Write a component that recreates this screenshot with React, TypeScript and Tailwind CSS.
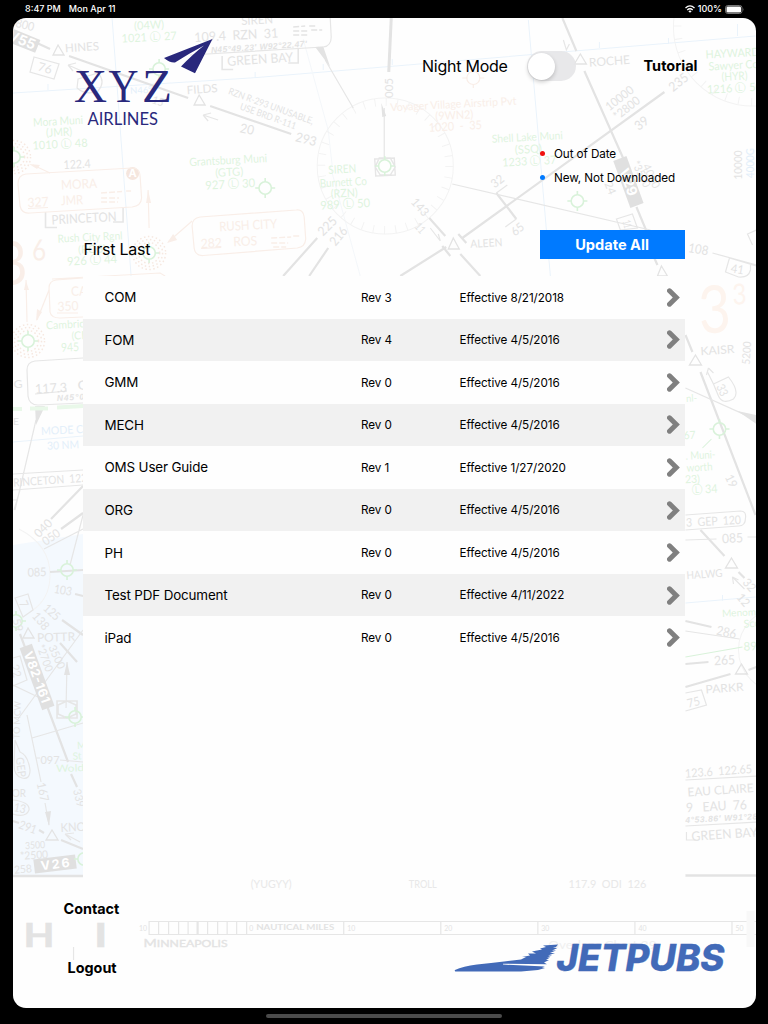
import React, { useState } from 'react';

const GRAY = '#e3e3e3';
const GREEN = '#def4de';
const PEACH = '#f9eee8';
const BLUE = '#e3effa';

const documents = [
  { name: 'COM', rev: 'Rev 3', effective: 'Effective 8/21/2018' },
  { name: 'FOM', rev: 'Rev 4', effective: 'Effective 4/5/2016' },
  { name: 'GMM', rev: 'Rev 0', effective: 'Effective 4/5/2016' },
  { name: 'MECH', rev: 'Rev 0', effective: 'Effective 4/5/2016' },
  { name: 'OMS User Guide', rev: 'Rev 1', effective: 'Effective 1/27/2020' },
  { name: 'ORG', rev: 'Rev 0', effective: 'Effective 4/5/2016' },
  { name: 'PH', rev: 'Rev 0', effective: 'Effective 4/5/2016' },
  { name: 'Test PDF Document', rev: 'Rev 0', effective: 'Effective 4/11/2022' },
  { name: 'iPad', rev: 'Rev 0', effective: 'Effective 4/5/2016' },
];

// [text, center x, center y, width, font size, rotation, color]
type Label = [string, number, number, number, number, number, string];

const labels: Label[] = [
  ['5800', 22, 24, 25, 12, 14, GRAY],
  ['HINES', 82, 47, 34, 11.5, -4, GRAY],
  ['76', 45, 68, 14, 12, 15, GRAY],
  ['(04W)', 149, 25, 30, 11.5, -3, GREEN],
  ['1021 Ⓛ 27', 149, 37, 55, 11.5, -3, GREEN],
  ['N46°', 141, 90, 22, 9, -3, BLUE],
  ['15', 158, 101, 12, 11, 18, GRAY],
  ['Mora Muni', 58, 121, 50, 11.5, -3, GREEN],
  ['(JMR)', 59, 132, 26, 11.5, -3, GREEN],
  ['1010 Ⓛ 48', 60, 144, 55, 11.5, -3, GREEN],
  ['FILDS', 202, 89, 31, 11.5, -4, GRAY],
  ['RZN R-293 UNUSABLE,', 271, 106, 90, 9.5, 20, GRAY],
  ['USE BRD R-111', 268, 116, 59, 9.5, 20, GRAY],
  ['20', 247, 129, 14, 13, 12, GRAY],
  ['293', 306, 139, 21, 13, 14, GRAY],
  ['SIREN', 257, 20, 32, 11.5, -3, GRAY],
  ['109.4  RZN  31', 236, 35, 84, 13, -3, GRAY],
  ['GREEN BAY', 260, 59, 66, 13, -4, GRAY],
  ['005', 388, 88, 20, 12, -90, GRAY],
  ['Voyager Village Airstrip Pvt', 453, 104, 126, 11, -3, PEACH],
  ['(9WN2)', 454, 115, 38, 11.5, -3, PEACH],
  ['1020  -  35', 455, 126, 53, 12, -3, PEACH],
  ['ROCHE', 609, 61, 41, 12, -4, GRAY],
  ['235', 678, 82, 21, 13, -38, GRAY],
  ['10000', 619, 98, 32, 12, -38, GRAY],
  ['*2800', 626, 108, 30, 12, -38, GRAY],
  ['39', 641, 123, 14, 13, -38, GRAY],
  ['Shell Lake Muni', 527, 137, 71, 11, -3, GREEN],
  ['(SSQ)', 528, 149, 27, 11.5, -3, GREEN],
  ['1233 Ⓛ 37', 529, 161, 54, 11.5, -3, GREEN],
  ['HAYWARD', 732, 53, 54, 11.5, -3, GREEN],
  ['Sawyer Co', 733, 65, 50, 11.5, -3, GREEN],
  ['(HYR)', 734, 76, 26, 11.5, -3, GREEN],
  ['1216 Ⓛ 50', 734, 88, 55, 11.5, -3, GREEN],
  ['10000', 738, 165, 29, 11, -90, GRAY],
  ['4000G', 750, 163, 30, 11, -90, BLUE],
  ['32', 497, 181, 13, 12, -38, GRAY],
  ['65', 517, 229, 13, 12, -38, GRAY],
  ['143', 420, 207, 20, 12, 48, GRAY],
  ['11', 420, 228, 10, 11, 48, GRAY],
  ['ALEEN', 486, 243, 32, 11, -3, GRAY],
  ['24', 610, 188, 13, 11, 68, GRAY],
  ['*3500', 641, 174, 28, 11, 64, GRAY],
  ['4000', 651, 176, 26, 11, 64, GRAY],
  ['11', 627, 224, 8, 11, 75, GRAY],
  ['122.4', 77, 164, 27, 12, -3, GRAY],
  ['MORA', 79, 184, 36, 13, -3, PEACH],
  ['327', 38, 202, 21, 13, -3, PEACH],
  ['JMR', 72, 200, 22, 13, -3, PEACH],
  ['PRINCETON', 84, 218, 65, 13, -3, GRAY],
  ['Rush City Rgnl', 90, 237, 65, 11, -3, GREEN],
  ['(ROS)', 92, 249, 28, 11, -3, GREEN],
  ['926 Ⓛ 44', 92, 260, 50, 12, -3, GREEN],
  ['RUSH CITY', 248, 225, 58, 13, -3, PEACH],
  ['282', 211, 243, 21, 13, -3, PEACH],
  ['ROS', 245, 241, 24, 13, -3, PEACH],
  ['Grantsburg Muni', 228, 160, 78, 11.5, -3, GREEN],
  ['(GTG)', 229, 172, 28, 11.5, -3, GREEN],
  ['927 Ⓛ 30', 230, 184, 50, 12, -3, GREEN],
  ['SIREN', 342, 169, 28, 11.5, -3, GREEN],
  ['Burnett Co', 343, 182, 47, 11.5, -3, GREEN],
  ['(RZN)', 344, 193, 27, 11.5, -3, GREEN],
  ['989 Ⓛ 50', 345, 204, 50, 12, -3, GREEN],
  ['225', 327, 226, 21, 13, -45, GRAY],
  ['216', 338, 236, 20, 13, -50, GRAY],
  ['3', 12, 263, 30, 60, -3, PEACH],
  ['6', 39, 250, 14, 29, -3, PEACH],
  ['CA', 79, 291, 16, 13, -3, PEACH],
  ['350', 68, 306, 21, 13, -3, PEACH],
  ['Cambridge', 71, 324, 50, 11, -3, GREEN],
  ['(CBG)', 85, 335, 27, 11, -3, GREEN],
  ['945', 70, 347, 18, 12, -3, GREEN],
  ['G', 18, 384, 9, 11, -3, GRAY],
  ['117.3', 51, 388, 32, 13, -3, GRAY],
  ['G', 83, 385, 11, 13, -3, GRAY],
  ['E', 16, 421, 6, 10, 0, GRAY],
  ['MODE C', 62, 430, 42, 11, -3, BLUE],
  ['30 NM', 63, 445, 32, 11, -3, BLUE],
  ['RINCETON  122', 50, 480, 74, 11.5, -4, GRAY],
  ['108', 698, 249, 20, 13, 10, GRAY],
  ['41', 737, 269, 13, 12, 10, GRAY],
  ['3', 714, 309, 32, 66, -3, '#fdf4ee'],
  ['3', 739, 294, 14, 29, -3, '#fdf4ee'],
  ['KAISR', 717, 350, 34, 11.5, -4, GRAY],
  ['5200', 746, 353, 23, 11, -86, GRAY],
  ['33', 722, 390, 12, 12, 65, GRAY],
  ['nl-', 691, 398, 11, 10, -3, GREEN],
  ['67', 689, 435, 12, 11, -3, GREEN],
  ['. Muni-', 700, 455, 30, 11, -3, GREEN],
  ['worth', 699, 467, 26, 11, -3, GREEN],
  ['23)', 692, 479, 15, 11, -3, GREEN],
  ['Ⓛ 34', 704, 489, 26, 12, -3, GREEN],
  ['19', 731, 481, 13, 12, 65, GRAY],
  ['3  GEP  120', 713, 521, 55, 12, -3, GRAY],
  ['085', 732, 538, 21, 13, -3, GRAY],
  ['HALWG', 704, 574, 36, 11, -4, GRAY],
  ['32', 749, 585, 13, 12, 50, GRAY],
  ['12', 743, 600, 13, 12, 50, GRAY],
  ['Menomonie', 748, 612, 53, 10, -3, GREEN],
  ['Score', 756, 623, 26, 11, -3, GREEN],
  ['890', 753, 646, 20, 12, -3, GREEN],
  ['286', 726, 632, 20, 13, 12, GRAY],
  ['265', 724, 660, 21, 13, -3, GRAY],
  ['PARKR', 724, 688, 38, 11.5, -4, GRAY],
  ['75', 693, 702, 13, 12, -14, GRAY],
  ['123.6  122.65', 718, 771, 67, 12, -4, GRAY],
  ['EAU CLAIRE', 720, 790, 66, 12, -4, GRAY],
  ['9   EAU  76', 716, 806, 61, 13, -3, GRAY],
  ['GREEN BAY', 724, 834, 66, 13, -4, GRAY],
  ['040', 43, 528, 20, 12, -45, GRAY],
  ['050', 51, 537, 19, 12, -35, GRAY],
  ['085', 37, 572, 19, 12, -2, GRAY],
  ['103', 63, 590, 18, 12, 10, GRAY],
  ['7', 24, 604, 6, 12, 65, GRAY],
  ['138', 41, 621, 19, 12, 50, GRAY],
  ['125', 52, 612, 18, 12, 42, GRAY],
  ['59', 18, 625, 13, 11, 75, GRAY],
  ['POTTR', 56, 637, 38, 12, -2, GRAY],
  ['*2700', 45, 658, 28, 11, 70, GRAY],
  ['3500', 57, 657, 25, 11, 65, GRAY],
  ['22', 16, 671, 13, 12, 75, GRAY],
  ['TO MCW', 17, 720, 38, 9, -88, GRAY],
  ['GEP', 21, 767, 20, 11, 82, GRAY],
  ['Min', 85, 745, 16, 10, -2, GREEN],
  ['St', 77, 756, 9, 10, -2, GREEN],
  ['Wold', 70, 768, 28, 10, -2, GREEN],
  ['097', 50, 760, 19, 12, 0, GRAY],
  ['OR', 19, 793, 14, 11, 0, GRAY],
  ['167', 43, 792, 19, 12, 78, GRAY],
  ['13', 20, 808, 12, 12, 12, GRAY],
  ['339', 79, 798, 18, 11, 75, GRAY],
  ['KNO', 73, 827, 25, 12, -3, GRAY],
  ['291', 28, 827, 18, 12, 20, GRAY],
  ['3500', 35, 845, 20, 10, -3, GRAY],
  ['*2500', 34, 855, 28, 11, -3, GRAY],
  ['258', 23, 869, 18, 11, -5, GRAY],
  ['(YUGYY)', 271, 884, 41, 11, 0, '#e8e8e8'],
  ['TROLL', 422.5, 884, 28, 11, 0, '#e8e8e8'],
  ['117.9  ODI  126', 607, 884, 78, 11, 0, '#e8e8e8'],
  ['Overlaps Chart 29', 602, 945, 108, 11, 0, '#f0f0f0'],
  ['10', 143, 928, 8, 7.5, 0, GRAY],
  ['0', 251, 928, 4, 7.5, 0, GRAY],
  ['10', 351, 928, 8, 7.5, 0, GRAY],
  ['20', 448, 928, 8, 7.5, 0, GRAY],
  ['30', 545, 928, 8, 7.5, 0, GRAY],
  ['40', 642, 928, 8, 7.5, 0, GRAY],
  ['50', 739, 928, 8, 7.5, 0, GRAY],
];

const ChartBackground = () => (
  <svg
    className="pointer-events-none absolute inset-0 h-full w-full select-none font-[Lato,sans-serif]"
    viewBox="13 18 742.5 989.5"
    preserveAspectRatio="none"
    fill="none"
    aria-hidden="true"
  >
    <path d="M13 545L83 534V877H13z" fill="#f4f9fe" />

    {/* lat / long grid */}
    <g stroke="#eaf3fb" strokeWidth="1">
      <path d="M13 93L250 78L755 36M112 18L131 276M528 20L550 276M255 72v6M323 64v6M392 59v6M599 42v6M668 38v6M737 24V36M48 84V90M13 442L83 436M685 603L755 597M722 595V601" />
    </g>
    <path d="M303 39L328 130L332 166M330 166L360 276" stroke="#f4f7fa" />

    {/* compass roses */}
    <g stroke="#f3f3f3">
      <circle cx="385" cy="166" r="68" />
      <circle cx="385" cy="166" r="64" strokeWidth="8" strokeDasharray="1 10.17" />
      <circle cx="752" cy="27" r="79" />
      <circle cx="752" cy="27" r="75" strokeWidth="8" strokeDasharray="1 12.1" />
      <circle cx="780" cy="650" r="42" />
      <path d="M19 529Q50 545 50 575Q50 600 30 612" />
    </g>

    {/* thick airways */}
    <g stroke={GRAY} strokeWidth="2.2">
      <path d="M37 43L50 49M69 56L188 98M210 106L291 134M283 276L317 238M309 276L328 248" />
      <path d="M391 18L388.5 72" strokeWidth="3" />
      <path d="M562 18L576 51M584 71L628 170M636 207L646 231M653 256L657 265M685 335L692 352M700 372L755 515" />
      <path d="M664 92L462 238M458 234L466 243M429 218L445 236M400 276L446 247M442 246L450 256M460 254L480 276M496 193L516 219" />
      <path d="M700 530L724 556M738 572L744 578M685 621L711 627M685 664L708 662M685 687L730 674M748 670L756 667" />
      <path d="M83 486L51 519M83 513L61 529M50 572L83 570M62 620L83 635M60 643L77 662M20 634L68 762M71 774L77 787M61 840L83 849M13 821L19 823M39 830L44 833M75 594L83 596" />
      <path d="M13 876H83M685 875.5H756" strokeWidth="2.6" />
    </g>

    {/* thin lines and frames */}
    <g stroke="#e6e6e6" strokeWidth="1.2">
      <path d="M330 18L331 37Q331 46 323 47L190 55M384 108L384 160M452 184L650 230M507 185L496 193M516 219L505 227M325 60L353 108" />
      <path d="M222 56V69.500H233M298 49V63H288M45.500 212V227.500H57M123 207V222H113" strokeWidth="1.6" />
      <path d="M34 57L59 64L54 79L30 72zM78 79L98 73Q106 82 98 91Q86 96 77 88z" />
      <path d="M616 219L632 214L637 228L620 230zM712 253L756 265M729 258L756 266M729 258L725 272L738 277Q748 278 750 270V263M756 230L747 234L752 245" />
      <path d="M685 388L756 420M707 372L713 384M713 384L728 377Q740 392 733 399Q722 405 718 396z" />
      <path d="M685 515L740 511Q746 511 745 518Q745 526 738 526L685 530M685 540L716 539M747 537H756" />
      <path d="M685 631L739 639M685 693L701 690L706 705L685 711M685 780L756 776M685 826L756 822M686 832V840H695M755 834H752" />
      <path d="M83 358L35 361Q27 362 27 370L28 396Q29 405 38 405L83 403M35 394L67 391M13 474L83 470M13 490L83 485M36 420L15 510M20 490L14 510" />
      <path d="M44 549L83 529M83 515L70 565M13 500L18 500M15 598L28 594L33 610L23 617zM13 658L20 656L27 680L13 686" />
      <path d="M83 630L18 719M13 685L38 697M32 738L83 723M27 715L41 782M36 758H40M60 760L83 762M67 662L66 708M45 803L49 825" />
      <path d="M15 740L20 752Q28 755 30 770Q30 780 22 778Q14 776 14 765zM13 800Q30 802 29 810Q26 818 13 814M73.500 947V960" />
      <path d="M57 701H77V718H57zM67 701L76 705V714L67 718L58 714V705z" strokeWidth="1.6" />
      <path d="M374.500 159L394 158L395 175L375.500 176zM379 158L390 158L395 167L390 175H380L375 167z" strokeWidth="1.4" />
      <path d="M68 65L76 63M68 65L73 71M68 65L84 72M203 115L211 113M203 115L208 121M203 115L218 120M563 40L566 50L569 44M708 368L706 375M708 368L713 373M65 834L74 833M65 834L71 840M65 834L80 842M430 228L440 241L438 234M732 577L733 584M732 577L738 580M732 577L744 589" />
    </g>

    {/* reporting points */}
    <g stroke={GRAY} strokeWidth="1.3">
      <path d="M58 45L64 55H53zM199 95L205 105H194zM580 54L586 64H574zM453 238L459 249H448zM695 355L701 365H689zM731 558L737 568H725zM741 664L747 674H735zM28 628L34 638H23zM52 830L58 840H46zM661 266L667 276H657z" />
    </g>

    {/* arrow heads */}
    <g fill={GRAY}>
      <path d="M315 47L323 46.500L330 67zM381 103L386 116L382 117zM35 406L45 406L36 425zM737 411L756 415V424zM67 662L70 675H64zM49 826L45 812L51 811z" />
    </g>

    {/* airway badges */}
    <g className="font-[Inter,sans-serif] font-bold" fontSize="11" textAnchor="middle">
      <g transform="translate(22 40) rotate(22)">
        <rect x="-17" y="-7" width="34" height="14" fill="#e0e0e0" />
        <text y="5" fill="#fff" fontSize="14">V55</text>
      </g>
      <g transform="translate(628 182) rotate(70)">
        <rect x="-25" y="-7" width="50" height="14" fill="#e0e0e0" />
        <text y="5" fill="#fff" fontSize="14">V29</text>
      </g>
      <g transform="translate(37 677) rotate(70)">
        <rect x="-33" y="-6.500" width="66" height="13" fill="#e0e0e0" />
        <text y="4.500" fill="#fff" fontSize="12.500" textLength="54">V82-161</text>
      </g>
      <g transform="translate(55 864) rotate(-7)">
        <rect x="-21" y="-7" width="42" height="14" fill="#e0e0e0" />
        <text y="4.500" fill="#fff" fontSize="12.500" textLength="29">V26</text>
      </g>
      <circle cx="132.500" cy="173.500" r="6.500" fill="#f5e6de" />
      <text x="132.500" y="177.500" fill="#fff">A</text>
    </g>

    {/* navaid boxes */}
    <g stroke={PEACH} strokeWidth="1.2">
      <path d="M26 174L132 168Q140 168 140 176L141.500 198Q141 206 132 207L30 213Q22 214 20 206L18 184Q18 175 26 174z" />
      <path d="M200 217L296 210Q303 209 304 217L305.500 239Q305 247 297 248L203 255.500Q195 256 194 248L192 226Q192 218 200 217z" />
      <path d="M83 278L56 280Q49 281 49 288L50 312Q51 318 60 318L83 317M57 313H78M28 208.500L48 207.500M201 248.500L221 247.500M50 173L33 165M192 221L168 242M49 290L37 320M52 279L160 273L165 276M148 190L149 228M26 280L27 322" />
      <path d="M101 193L122 191.500M126 191L131 191M101 198H119M101 202H118M271 238L291 237M293 236L299 236M271 243H288M273 247H286" strokeWidth="1.4" strokeDasharray="6 2" />
      <circle cx="473" cy="78" r="6.500" />
      <path d="M473 68V72M473 84V88M462 78H467M479 78H484" />
    </g>
    <path d="M29 164L40 165L37 169zM167 243L177 240L173 234zM148 190L151 203H146zM36 321L37 309L42 312zM26 281L29 290H24z" fill={PEACH} />
    <path d="M293 27L305 26M309 26H316M293 31H308M293 35H308M311 30H322" stroke={GRAY} strokeWidth="1.4" strokeDasharray="6 2" />

    {/* stippled beacons */}
    <g stroke="#f6e8e0" strokeWidth="1.500" strokeDasharray="1.500 2.500">
      {[[14, 157], [149, 253], [28, 341]].map(([cx, cy]) => (
        <g key={cy}>
          <circle cx={cx} cy={cy} r="16.500" />
          <circle cx={cx} cy={cy} r="13.500" />
          <circle cx={cx} cy={cy} r="10.500" />
        </g>
      ))}
    </g>

    {/* airports */}
    <g stroke="#d9f2da" strokeWidth="1.6">
      {[[14, 157], [149, 253], [28, 341], [265, 188], [577, 201], [719, 429], [67, 570], [159, 69], [75, 717], [84, 859], [16, 621], [384.5, 166]].map(([x, y]) => (
        <g key={`${x}-${y}`} transform={`translate(${x} ${y})`}>
          <circle r="6.200" />
          <path d="M0 -10V-6M0 6V10M-10 0H-6M6 0H10" />
        </g>
      ))}
      <path d="M685 657L742 647M702 448L711 439" strokeWidth="1" />
    </g>
    <path d="M13 409H22M30 408.500H48M57 407.500L83 406" stroke="#e9f8e9" strokeWidth="4" />

    {/* scale bar */}
    <g stroke="#e6e6e6" strokeWidth="1.2">
      <path d="M756 921.500H149V934.500H756" />
      <path d="M158.500 921V935M168.500 921V935M178.500 921V935M188 921V935M207.500 921V935M217.500 921V935M227 921V935M236.500 921V935M246.500 921V935M343.500 921V935M440.500 921V935M537.500 921V935M634.500 921V935M731.500 921V935" />
      <path d="M197.500 921V935" strokeWidth="2.200" />
    </g>
    <rect x="746" y="911" width="8" height="36" fill="#f8f8f8" />

    <g fill={GRAY} className="font-bold">
      <text x="23.500" y="947.500" fontSize="33" textLength="31" lengthAdjust="spacingAndGlyphs" stroke={GRAY} strokeWidth="0.6">H</text>
      <text x="94" y="947.500" fontSize="33" textLength="13.500" lengthAdjust="spacingAndGlyphs" stroke={GRAY} strokeWidth="0.6">I</text>
      <text x="256" y="930.500" fontSize="7.500" textLength="78" lengthAdjust="spacingAndGlyphs">NAUTICAL MILES</text>
      <text x="143.500" y="947" fontSize="10.500" textLength="84" lengthAdjust="spacingAndGlyphs" className="font-normal" stroke={GRAY} strokeWidth="0.3">
        M<tspan fontSize="9">INNEAPOLIS</tspan>
      </text>
    </g>
    <g fill={GRAY} className="font-[Liberation_Sans,sans-serif] font-bold italic" fontSize="8.500">
      <text transform="translate(211 53) rotate(-3.800)" textLength="96">N45°49.23' W92°22.47'</text>
      <text transform="translate(57 401) rotate(-3)" textLength="36">N45°05.</text>
      <text transform="translate(685 823) rotate(-3)" textLength="72">4°53.86' W91°28</text>
    </g>

    {labels.map(([text, x, y, width, size, angle, color], i) => (
      <text
        key={i}
        transform={`translate(${x} ${y}) rotate(${angle})`}
        x={-width / 2}
        y={size * 0.36}
        fontSize={size}
        fill={color}
        textLength={width}
        lengthAdjust="spacingAndGlyphs"
        xmlSpace="preserve"
      >
        {text}
      </text>
    ))}
  </svg>
);

const AirlineLogo = () => (
  <svg className="h-[92px] w-[142px]" viewBox="72 36 142 92" fill="#29287c">
    <path d="M212.500 39L164 58Q170 63 175 62.500Q190 53 204 45.500Q193 54 181 66.500L195 73.300Z" />
    <g className="font-[Liberation_Serif,serif]" fontSize="46.500">
      <text x="74" y="102" textLength="33" lengthAdjust="spacingAndGlyphs">X</text>
      <text x="108.500" y="102" textLength="30" lengthAdjust="spacingAndGlyphs">Y</text>
      <text x="142" y="102" textLength="30" lengthAdjust="spacingAndGlyphs">Z</text>
    </g>
    <text x="87.500" y="124.800" fontSize="16.500" textLength="70.500" lengthAdjust="spacingAndGlyphs" className="font-[Lato,sans-serif]">AIRLINES</text>
  </svg>
);

const JetpubsLogo = () => (
  <svg className="h-[32px] w-[272px]" viewBox="453 942 272 32" fill="#426ab8">
    <path d="M454 970Q462 966 476 964.500L490 963L503 961.500L520 959.500L525 957H521L529 955.500L527 953.500H535L531 951.500L541 949.500L539 948.500L545 947L542 945.500L557 944.500L555 947H552L556 948.200L551 950.500H555L549 953H554L547 955.500H551L546 957.500H549L545 960H548L543 962.500L546 964.200L502 963.800V964.600L544 966.400L541 967.200L544 968L537 970L520 971.500H456Q453 971.500 454 970z" />
    <text
      x="555.500"
      y="971"
      fontSize="36.500"
      textLength="168"
      lengthAdjust="spacingAndGlyphs"
      stroke="#426ab8"
      strokeWidth="0.300"
      className="font-[Inter,sans-serif] font-extrabold italic"
    >
      JETPUBS
    </text>
  </svg>
);

const StatusBar = () => (
  <header className="flex h-[18px] items-center justify-between pr-[24px] pl-[25px] text-[9px] font-medium text-white">
    <div className="flex gap-[8px]">
      <span>8:47 PM</span>
      <span>Mon Apr 11</span>
    </div>
    <div className="flex items-center gap-[3px]">
      <svg className="h-[8px] w-[10px]" viewBox="0 0 20 16" fill="none" stroke="white" strokeWidth="2.6">
        <path d="M1 6Q10 -2.500 19 6M4.500 10Q10 5 15.500 10" />
        <path d="M10 15.500L6.800 12.300Q10 9.500 13.200 12.300z" fill="white" stroke="none" />
      </svg>
      <span>100%</span>
      <svg className="h-[9px] w-[19px]" viewBox="0 0 19 9">
        <rect x="0.500" y="0.500" width="16.500" height="8" rx="2.300" fill="none" stroke="#777" />
        <rect x="1.500" y="1.500" width="14.500" height="6" rx="1.300" fill="white" />
        <path d="M18 3Q19 4.500 18 6z" fill="#777" />
      </svg>
    </div>
  </header>
);

export default function App() {
  const [nightMode, setNightMode] = useState(false);

  return (
    <div className="flex h-[1024px] w-[768px] flex-col bg-black font-[Inter,sans-serif] text-black">
      <StatusBar />

      <main className="relative ml-[12.5px] h-[989.5px] w-[743px] overflow-hidden rounded-[13px] bg-[#fefefe]">
        <ChartBackground />

        <div className="relative flex h-full flex-col">
          <div className="flex h-[258px] justify-between pl-[59.5px]">
            <div className="flex flex-col pt-[18px]">
              <AirlineLogo />
              <p className="mt-[111px] pl-[11.5px] text-[16px] leading-[20px] tracking-[-0.25px]">First Last</p>
            </div>

            <div className="flex w-[334px] flex-col pt-[33px]">
              <div className="flex h-[30px] items-center">
                <span className="w-[105px] pl-[0.5px] text-[16px] tracking-[-0.25px]">Night Mode</span>
                <button
                  onClick={() => setNightMode(!nightMode)}
                  className={`flex h-[30px] w-[49px] items-center rounded-full bg-[#e5e5e8]/90 p-[1px] ${nightMode ? 'justify-end' : ''}`}
                >
                  <span className="size-[27px] rounded-full bg-white shadow-[0_2px_4px_rgba(0,0,0,0.2)]" />
                </button>
                <a className="ml-[68px] text-[14.5px] font-bold">Tutorial</a>
              </div>

              <ul className="mt-[60px] ml-[118px] text-[11.7px] leading-[24px] tracking-[-0.1px]">
                <li className="flex items-center gap-[9.5px]">
                  <span className="size-[5px] rounded-full bg-[#f0120f]" />
                  <span className="pt-[0.5px]">Out of Date</span>
                </li>
                <li className="flex items-center gap-[9.5px]">
                  <span className="size-[5px] rounded-full bg-[#007aff]" />
                  New, Not Downloaded
                </li>
              </ul>

              <button className="mt-[40.5px] ml-[118px] h-[29px] w-[145px] bg-[#007aff] pt-[2px] text-[14.6px] font-bold text-white">
                Update All
              </button>
            </div>
          </div>

          <section className="ml-[70.5px] h-[601px] w-[602px] bg-[#fefefe]">
            {documents.map((doc) => (
              <div key={doc.name} className="flex h-[42.56px] items-center pr-[5px] pl-[21.5px] even:bg-[#f1f1f1]">
                <span className="w-[256.5px] text-[13.4px] tracking-[-0.15px]">{doc.name}</span>
                <span className="w-[98.5px] pt-[2px] text-[11.7px] tracking-[-0.05px]">{doc.rev}</span>
                <span className="flex-1 pt-[2px] text-[11.7px] tracking-[-0.05px]">{doc.effective}</span>
                <svg className="h-[19px] w-[13px]" viewBox="0 0 13 19" fill="none" stroke="#808080" strokeWidth="5">
                  <path d="M2.500 2.800L9.300 9.500L2.500 16.200" strokeLinecap="round" />
                </svg>
              </div>
            ))}
          </section>

          <footer className="flex justify-between pt-[22px] pr-[30px] pl-[51px]">
            <div className="flex flex-col items-start text-[14.4px] font-bold">
              <a className="leading-[20px]">Contact</a>
              <a className="mt-[39px] ml-[4px] leading-[20px]">Logout</a>
            </div>
            <div className="pt-[42.5px]">
              <JetpubsLogo />
            </div>
          </footer>
        </div>
      </main>

      <div className="mx-auto mt-[6.5px] h-[4px] w-[236px] rounded-full bg-[#4b4b4b]" />
    </div>
  );
}
